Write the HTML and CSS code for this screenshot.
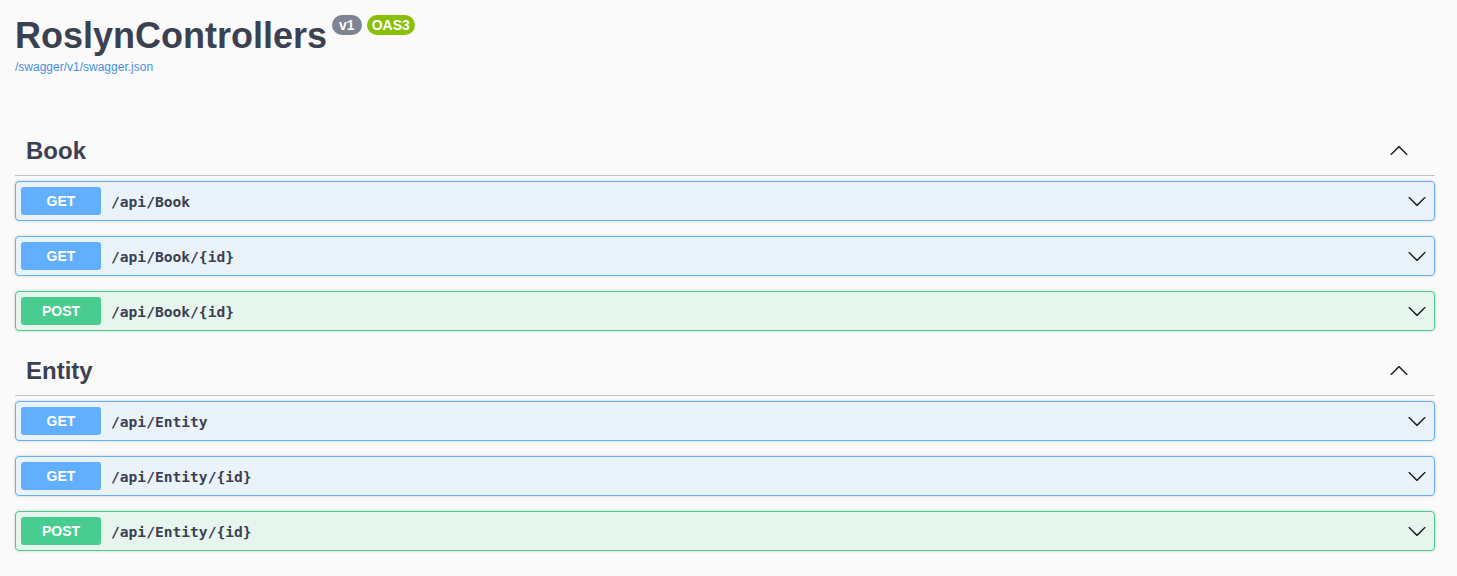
FILE: index.html
```html
<!DOCTYPE html>
<html>
<head>
<meta charset="utf-8">
<link rel="stylesheet" href="styles.css">
</head>
<body>
<div class="wrapper">
  <div class="info">
    <h2 class="title">RoslynControllers
      <span class="badges"><span class="badge badge-version">v1</span><span class="badge badge-oas">OAS3</span></span>
    </h2>
    <a class="link" href="#">/swagger/v1/swagger.json</a>
  </div>

  <section class="tag-section">
    <h3 class="tag">
      <span class="tag-name">Book</span>
      <svg class="tag-arrow" viewBox="0 0 20 20" width="20" height="20"><path d="M17.418 6.109c.272-.268.709-.268.979 0s.271.701 0 .969l-7.908 7.830c-.27.268-.707.268-.979 0l-7.908-7.83c-.27-.268-.27-.701 0-.969.271-.268.709-.268.979 0L10 13.25l7.418-7.141z"/></svg>
    </h3>
    <div class="opblock get">
      <span class="method">GET</span><span class="path">/api/Book</span>
      <svg class="op-arrow" viewBox="0 0 20 20" width="20" height="20"><path d="M17.418 6.109c.272-.268.709-.268.979 0s.271.701 0 .969l-7.908 7.83c-.27.268-.707.268-.979 0l-7.908-7.83c-.27-.268-.27-.701 0-.969.271-.268.709-.268.979 0L10 13.25l7.418-7.141z"/></svg>
    </div>
    <div class="opblock get">
      <span class="method">GET</span><span class="path">/api/Book/{id}</span>
      <svg class="op-arrow" viewBox="0 0 20 20" width="20" height="20"><path d="M17.418 6.109c.272-.268.709-.268.979 0s.271.701 0 .969l-7.908 7.83c-.27.268-.707.268-.979 0l-7.908-7.83c-.27-.268-.27-.701 0-.969.271-.268.709-.268.979 0L10 13.25l7.418-7.141z"/></svg>
    </div>
    <div class="opblock post">
      <span class="method">POST</span><span class="path">/api/Book/{id}</span>
      <svg class="op-arrow" viewBox="0 0 20 20" width="20" height="20"><path d="M17.418 6.109c.272-.268.709-.268.979 0s.271.701 0 .969l-7.908 7.83c-.27.268-.707.268-.979 0l-7.908-7.83c-.27-.268-.27-.701 0-.969.271-.268.709-.268.979 0L10 13.25l7.418-7.141z"/></svg>
    </div>
  </section>

  <section class="tag-section">
    <h3 class="tag">
      <span class="tag-name">Entity</span>
      <svg class="tag-arrow" viewBox="0 0 20 20" width="20" height="20"><path d="M17.418 6.109c.272-.268.709-.268.979 0s.271.701 0 .969l-7.908 7.83c-.27.268-.707.268-.979 0l-7.908-7.83c-.27-.268-.27-.701 0-.969.271-.268.709-.268.979 0L10 13.25l7.418-7.141z"/></svg>
    </h3>
    <div class="opblock get">
      <span class="method">GET</span><span class="path">/api/Entity</span>
      <svg class="op-arrow" viewBox="0 0 20 20" width="20" height="20"><path d="M17.418 6.109c.272-.268.709-.268.979 0s.271.701 0 .969l-7.908 7.83c-.27.268-.707.268-.979 0l-7.908-7.83c-.27-.268-.27-.701 0-.969.271-.268.709-.268.979 0L10 13.25l7.418-7.141z"/></svg>
    </div>
    <div class="opblock get">
      <span class="method">GET</span><span class="path">/api/Entity/{id}</span>
      <svg class="op-arrow" viewBox="0 0 20 20" width="20" height="20"><path d="M17.418 6.109c.272-.268.709-.268.979 0s.271.701 0 .969l-7.908 7.83c-.27.268-.707.268-.979 0l-7.908-7.83c-.27-.268-.27-.701 0-.969.271-.268.709-.268.979 0L10 13.25l7.418-7.141z"/></svg>
    </div>
    <div class="opblock post">
      <span class="method">POST</span><span class="path">/api/Entity/{id}</span>
      <svg class="op-arrow" viewBox="0 0 20 20" width="20" height="20"><path d="M17.418 6.109c.272-.268.709-.268.979 0s.271.701 0 .969l-7.908 7.83c-.27.268-.707.268-.979 0l-7.908-7.83c-.27-.268-.27-.701 0-.969.271-.268.709-.268.979 0L10 13.25l7.418-7.141z"/></svg>
    </div>
  </section>
</div>
</body>
</html>
```

FILE: styles.css
```css
html, body {
  margin: 0;
  padding: 0;
  background: #fafafa;
  font-family: "Liberation Sans", Arial, sans-serif;
  color: #3b4151;
}

.wrapper {
  width: 1420px;
  padding: 15px 0 0 15px;
}

.info {
  display: flex;
  flex-direction: column;
  align-items: flex-start;
  margin-bottom: 52px;
}

.title {
  display: flex;
  align-items: flex-start;
  margin: 0;
  font-size: 36px;
  line-height: 41px;
  font-weight: bold;
  color: #3b4151;
}

.badges {
  display: flex;
  gap: 5px;
  margin-left: 5px;
}

.badge {
  display: inline-block;
  height: 20px;
  line-height: 20px;
  border-radius: 10px;
  color: #fff;
  font-size: 14px;
  font-weight: bold;
}

.badge-version {
  background: #7d8492;
  padding: 0 7px;
}

.badge-oas {
  background: #89bf04;
  padding: 0 5px;
}

.link {
  margin-top: 4px;
  font-size: 12px;
  line-height: 14px;
  color: #4990e2;
  text-decoration: none;
}

.tag-section {
  display: flex;
  flex-direction: column;
}

.tag {
  display: flex;
  align-items: center;
  justify-content: space-between;
  margin: 0 0 5px;
  padding: 10px 26px 10px 10px;
  font-size: 24px;
  line-height: 29px;
  font-weight: bold;
  border-bottom: 1px solid rgba(59, 65, 81, 0.3);
}

.tag-name {
  padding-left: 1px;
}

.tag-arrow {
  transform: rotate(180deg);
  fill: #222;
}

.opblock {
  display: flex;
  align-items: center;
  height: 28px;
  padding: 5px;
  margin-bottom: 15px;
  border: 1px solid;
  border-radius: 4px;
  box-shadow: 0 0 3px rgba(0, 0, 0, 0.19);
}

.opblock.get {
  background: rgba(97, 175, 254, 0.1);
  border-color: #61affe;
}

.opblock.post {
  background: rgba(73, 204, 144, 0.1);
  border-color: #49cc90;
}

.method {
  width: 80px;
  height: 28px;
  line-height: 28px;
  text-align: center;
  border-radius: 3px;
  color: #fff;
  font-size: 14px;
  font-weight: bold;
}

.get .method {
  background: #61affe;
}

.post .method {
  background: #49cc90;
}

.path {
  flex: 1;
  padding: 0 10px;
  font-family: "DejaVu Sans Mono", monospace;
  font-size: 14.6px;
  font-weight: bold;
  color: #3b4151;
}

.op-arrow {
  margin-right: 2px;
  fill: #222;
}
```
